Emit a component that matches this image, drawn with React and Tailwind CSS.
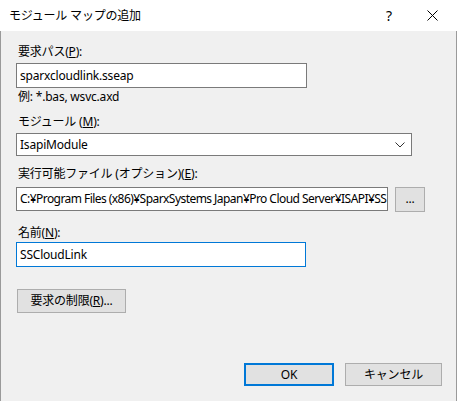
import React from "react";

const font = { fontFamily: '"Noto Sans", "Noto Sans CJK JP", sans-serif' };

function Label({ children, className = "" }) {
  return (
    <div className={"h-[16px] text-[12px] leading-[16px] text-black " + className}>{children}</div>
  );
}

export default function App() {
  return (
    <div
      className="w-[457px] h-[401px] flex flex-col bg-[#f0f0f0] overflow-hidden tracking-[-0.2px]"
      style={font}
    >
      <div className="h-[31px] bg-white flex items-center shrink-0">
        <div className="pl-[9px] text-[12px] text-black flex-1">モジュール マップの追加</div>
        <div className="w-[14px] text-[14px] text-black mr-[31px] text-center">?</div>
        <svg width="11" height="11" viewBox="0 0 11 11" className="mr-[19px]">
          <path d="M0.5 0.5 L10.5 10.5 M10.5 0.5 L0.5 10.5" stroke="#000" strokeWidth="1" />
        </svg>
      </div>
      <div className="flex-1 flex flex-col pl-[15px] pt-[13px] border-l border-r border-[#9a9a9a]">
        <Label className="pl-[2px]">
          要求パス(<span className="underline">P</span>):
        </Label>
        <div className="mt-[3px] w-[291px] h-[25px] bg-white border border-[#7a7a7a] flex items-center pl-[3px] text-[12px] text-black">
          sparxcloudlink.sseap
        </div>
        <Label className="pl-[2px] mt-[1px]">例: *.bas, wsvc.axd</Label>
        <Label className="pl-[2px] mt-[9px]">
          モジュール (<span className="underline">M</span>):
        </Label>
        <div className="mt-[3px] w-[396px] h-[23px] bg-white border border-[#7a7a7a] flex items-center pl-[3px] text-[12px] text-black">
          <span className="flex-1">IsapiModule</span>
          <svg width="10" height="6" viewBox="0 0 10 6" className="mr-[6px]">
            <path d="M0.5 0.5 L5 5 L9.5 0.5" stroke="#333" strokeWidth="1" fill="none" />
          </svg>
        </div>
        <Label className="pl-[2px] mt-[10px]">
          実行可能ファイル (オプション)(<span className="underline">E</span>):
        </Label>
        <div className="mt-[5px] flex items-start">
          <div className="w-[372px] h-[24px] bg-white border border-[#7a7a7a] flex items-center pl-[3px] text-[12px] text-black overflow-hidden whitespace-nowrap">
            <span className="tracking-[-0.55px]">C:¥Program Files (x86)¥SparxSystems Japan¥Pro Cloud Server¥ISAPI¥SS</span>
          </div>
          <div className="ml-[7px] w-[30px] h-[25px] bg-[#e1e1e1] border border-[#adadad] flex items-center justify-center text-[12px] text-black leading-none pb-[2px]">
            ...
          </div>
        </div>
        <Label className="pl-[2px] mt-[13px]">
          名前(<span className="underline">N</span>):
        </Label>
        <div className="mt-[1px] w-[290px] h-[25px] bg-white border border-[#0078d7] flex items-center pl-[3px] text-[12px] text-black">
          SSCloudLink
        </div>
        <div className="mt-[22px] ml-[1px] w-[109px] h-[24px] bg-[#e1e1e1] border border-[#adadad] flex items-center justify-center text-[12px] text-black">
          要求の制限(<span className="underline">R</span>)...
        </div>
        <div className="mt-[50px] flex pl-[228px]">
          <div className="w-[90px] h-[23px] bg-[#e1e1e1] border-2 border-[#0078d7] flex items-center justify-center text-[12px] text-black">
            OK
          </div>
          <div className="ml-[11px] w-[97px] h-[23px] bg-[#e1e1e1] border border-[#adadad] flex items-center justify-center text-[12px] text-black">
            キャンセル
          </div>
        </div>
      </div>
    </div>
  );
}
